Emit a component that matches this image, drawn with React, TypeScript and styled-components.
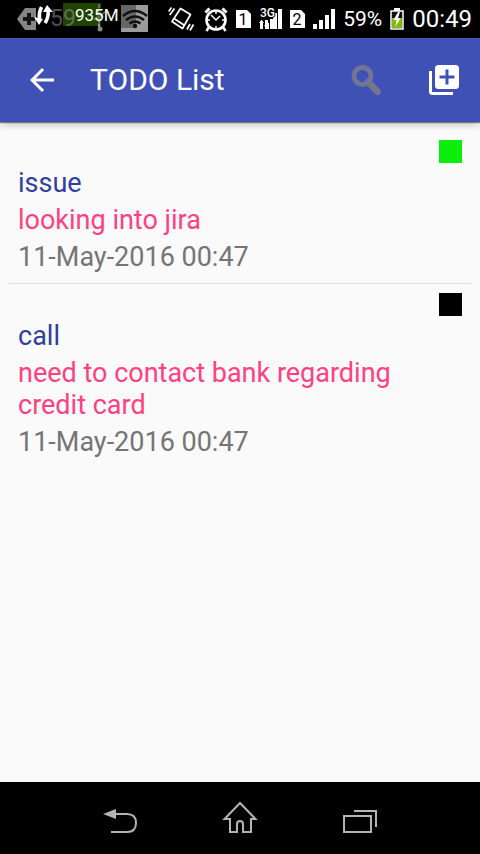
import React from "react";
import styled, { createGlobalStyle } from "styled-components";

const GlobalStyle = createGlobalStyle`
  * { box-sizing: border-box; }
  body { margin: 0; background: #fafafa; font-family: Roboto, "Noto Sans", sans-serif; }
`;

const Screen = styled.div`
  display: flex;
  flex-direction: column;
  min-height: 100vh;
  background: #fafafa;
`;

const StatusBar = styled.div`
  display: flex;
  align-items: center;
  justify-content: space-between;
  height: 38px;
  padding: 0 8px 0 16px;
  background: #000;
  color: #fff;
  svg { display: block; }
`;

const Overlay = styled.div`
  position: relative;
  width: 133px;
  height: 38px;
`;

const GreenBlock = styled.span`
  position: absolute;
  left: 47px;
  top: 3px;
  width: 38px;
  height: 23px;
  background: #1f4400;
`;

const DimPercent = styled.span`
  position: absolute;
  left: 34px;
  top: 6px;
  font-size: 23px;
  line-height: 26px;
  color: rgba(160, 160, 160, 0.5);
`;

const Memory = styled.span`
  position: absolute;
  left: 59px;
  top: 5px;
  font-size: 17px;
  line-height: 20px;
`;

const OverlayArt = styled.svg`
  position: absolute;
  left: 0;
  top: 0;
`;

const StatusIcons = styled.div`
  display: flex;
  align-items: center;
  gap: 8px;
`;

const Percent = styled.span`
  font-size: 21px;
  line-height: 38px;
`;

const Clock = styled.time`
  font-size: 24px;
  line-height: 38px;
`;

const AppBar = styled.header`
  position: relative;
  display: flex;
  align-items: center;
  height: 84px;
  padding: 0 18px 0 24px;
  background: #3f51b5;
  box-shadow: 0 1px 1px rgba(0, 0, 0, 0.45), 0 3px 8px rgba(0, 0, 0, 0.2);
`;

const IconButton = styled.button`
  display: flex;
  align-items: center;
  justify-content: center;
  width: 36px;
  height: 48px;
  padding: 0;
  border: 0;
  background: none;
  cursor: pointer;
`;

const Title = styled.h1`
  flex: 1;
  margin: 0 0 0 30px;
  color: #fff;
  font-size: 30px;
  font-weight: 400;
  line-height: 36px;
`;

const Actions = styled.div`
  display: flex;
  gap: 42px;
`;

const List = styled.ul`
  flex: 1;
  margin: 0;
  padding: 9px;
  list-style: none;
`;

const Item = styled.li`
  padding: 9px 9px 10px;
  font-size: 27px;
  line-height: 32px;
  & + & { border-top: 1px solid #dedede; }
`;

const Swatch = styled.div<{ $color: string }>`
  width: 23px;
  height: 23px;
  margin: 0 0 4px auto;
  background: ${(p) => p.$color};
`;

const Lines = styled.div`
  display: flex;
  flex-direction: column;
  gap: 5px;
`;

const Line = styled.span<{ $color: string }>`
  color: ${(p) => p.$color};
`;

const NavBar = styled.nav`
  display: grid;
  grid-template-columns: repeat(3, 1fr);
  justify-items: center;
  align-items: center;
  height: 72px;
  padding: 0 12.5%;
  background: #000;
`;

const todos = [
  { title: "issue", note: "looking into jira", date: "11-May-2016 00:47", color: "#0cee0c" },
  { title: "call", note: "need to contact bank regarding credit card", date: "11-May-2016 00:47", color: "#000" },
];

const SimCard = ({ slot }: { slot: string }) => (
  <svg width="15" height="18" viewBox="0 0 15 18">
    <path d="M0 0h11l4 4v14H0z" fill="#fff" />
    <text x="7" y="15" textAnchor="middle" fontSize="16" fill="#000">{slot}</text>
  </svg>
);

const Vibrate = () => (
  <svg width="28" height="24" viewBox="0 0 28 24" fill="none" stroke="#fff">
    <path d="M12.500 1.500 22.500 7.500 14.500 21.500 4 14.500zM6 11.500l10 6.500" strokeWidth="1.700" strokeLinejoin="round" />
    <path d="M.7 4.500 3.500.5M1.700 8 6.500 1.500M19 22.500 22 17M22 23.500 25.500 17.500" strokeWidth="1.700" />
  </svg>
);

const Alarm = () => (
  <svg width="24" height="25" viewBox="0 0 24 25" fill="none" stroke="#fff">
    <circle cx="12" cy="13" r="9.500" strokeWidth="2.600" />
    <path d="m7 8 5 5 4-4M12 4v3M12 19v3M3 13h3M18 13h3" strokeWidth="1.500" />
    <path d="m1.500 5.500 4-4M22.500 5.500l-4-4" strokeWidth="3" />
    <path d="m5 20-2.500 4M19 20l2.500 4" strokeWidth="2.500" />
  </svg>
);

const DataSignal = () => (
  <svg width="23" height="32" viewBox="0 -5 23 32" fill="#fff">
    <path d="M6 15h4v6H6zM11 11h4v10h-4zM14 5h4v16h-4zM19 1h4v20h-4z" />
    <path d="M0 15l2.500-3.500L5 15H4v6H1v-6zM5 17l2.500 4 2.500-4H9v-5H6v5z" />
    <text x="1" y="9" fontSize="12" fontWeight="500" stroke="#000" strokeWidth="2" paintOrder="stroke">3G</text>
  </svg>
);

const Signal = () => (
  <svg width="22" height="20" viewBox="0 0 22 20" fill="#fff">
    <path d="M0 15h4v5H0zM6 11h4v9H6zM12 6h4v14h-4zM18 0h4v20h-4z" />
  </svg>
);

const Battery = () => (
  <svg width="14" height="22" viewBox="0 0 14 22">
    <path d="M4 0h6v3H4z" fill="#fff" />
    <path d="M1 3h12v18H1z" fill="#111" stroke="#fff" strokeWidth="1.500" />
    <path d="M2 10h10v10H2z" fill="#82b90d" />
    <path d="M8 4 3.500 12h3L5.500 19l5-9H8l2-6z" fill="#fff" />
  </svg>
);

export default function App() {
  return (
    <Screen>
      <GlobalStyle />
      <StatusBar>
        <Overlay>
          <GreenBlock />
          <DimPercent>59</DimPercent>
          <OverlayArt width="133" height="38" viewBox="0 0 133 38" fill="none">
            <path d="M1 19 9 8h11v22H9z" fill="#858585" />
            <path d="M13 13v12M7 19h12" stroke="#151515" strokeWidth="4" />
            <path d="M83 4v4M83 13v11M78 20l11-8M80 10l7 7" stroke="#728d60" strokeWidth="2" opacity=".7" />
            <path d="M83 24v3" stroke="#999" strokeWidth="2" />
            <circle cx="84" cy="29" r="2.500" fill="#888" />
            <path d="M105 5h27v27h-27z" fill="#9c9c9c" />
            <path d="M105 5h15v23h-15z" fill="#666" />
            <path d="M107 16q12-10 24 0M110 20q9-7 18 0M113.500 23.500q5.500-4 11 0" stroke="#101010" strokeWidth="2.500" />
            <circle cx="119" cy="26" r="2.200" fill="#101010" />
            <path d="M25.500 7q-3 6-2 12" stroke="#fff" strokeWidth="3.500" />
            <path d="m18 17 5 8 4-6z" fill="#fff" />
            <path d="M29 23q4-6 3-13" stroke="#fff" strokeWidth="3.500" />
            <path d="m27 12 4-7 6 7z" fill="#fff" />
          </OverlayArt>
          <Memory>935M</Memory>
        </Overlay>
        <StatusIcons>
          <Vibrate />
          <Alarm />
          <SimCard slot="1" />
          <DataSignal />
          <SimCard slot="2" />
          <Signal />
          <Percent>59%</Percent>
          <Battery />
          <Clock>00:49</Clock>
        </StatusIcons>
      </StatusBar>
      <AppBar>
        <IconButton aria-label="Back">
          <svg width="36" height="36" viewBox="0 0 24 24" fill="#fff">
            <path d="M20 11H7.830l5.590-5.590L12 4l-8 8 8 8 1.410-1.410L7.830 13H20z" />
          </svg>
        </IconButton>
        <Title>TODO List</Title>
        <Actions>
          <IconButton aria-label="Search">
            <svg width="32" height="32" viewBox="0 0 32 32" fill="none">
              <circle cx="12.500" cy="12" r="8.500" stroke="#6570b8" strokeWidth="5" />
              <path d="m18 18 9.500 9.500" stroke="#6570b8" strokeWidth="7" strokeLinecap="round" />
              <circle cx="12.500" cy="12" r="8.500" stroke="#777780" strokeWidth="3" />
              <path d="m18 18 3 3" stroke="#777780" strokeWidth="3" />
              <path d="m22 22 5 5" stroke="#777780" strokeWidth="6" strokeLinecap="round" />
            </svg>
          </IconButton>
          <IconButton aria-label="Add item">
            <svg width="36" height="36" viewBox="0 0 24 24" fill="#fff">
              <path d="M4 6H2v14c0 1.100.9 2 2 2h14v-2H4V6zm16-4H8c-1.100 0-2 .9-2 2v12c0 1.100.9 2 2 2h12c1.100 0 2-.9 2-2V4c0-1.100-.9-2-2-2zm-1 9h-4v4h-2v-4H9V9h4V5h2v4h4v2z" />
            </svg>
          </IconButton>
        </Actions>
      </AppBar>
      <List>
        {todos.map((t) => (
          <Item key={t.title}>
            <Swatch $color={t.color} />
            <Lines>
              <Line $color="#303f9f">{t.title}</Line>
              <Line $color="#ff4081">{t.note}</Line>
              <Line as="time" $color="#757575">{t.date}</Line>
            </Lines>
          </Item>
        ))}
      </List>
      <NavBar>
        <IconButton aria-label="System back">
          <svg width="36" height="32" viewBox="0 0 36 32" fill="none">
            <path d="M8 12h17q9 0 9 9t-9 9H9" stroke="#b4b4b4" strokeWidth="2" />
            <path d="M1 12 14 7v10z" fill="#b4b4b4" />
          </svg>
        </IconButton>
        <IconButton aria-label="Home">
          <svg width="36" height="34" viewBox="0 0 36 34" fill="none" stroke="#b4b4b4" strokeWidth="2">
            <path d="M18 2 2.500 18H8v13h7v-8q0-3 3-3t3 3v8h8V18h4.500z" />
          </svg>
        </IconButton>
        <IconButton aria-label="Recent apps">
          <svg width="36" height="32" viewBox="0 0 36 32" fill="none" stroke="#b4b4b4" strokeWidth="2">
            <path d="M2 14h27v16H2zM12 9h22v16" />
          </svg>
        </IconButton>
      </NavBar>
    </Screen>
  );
}
